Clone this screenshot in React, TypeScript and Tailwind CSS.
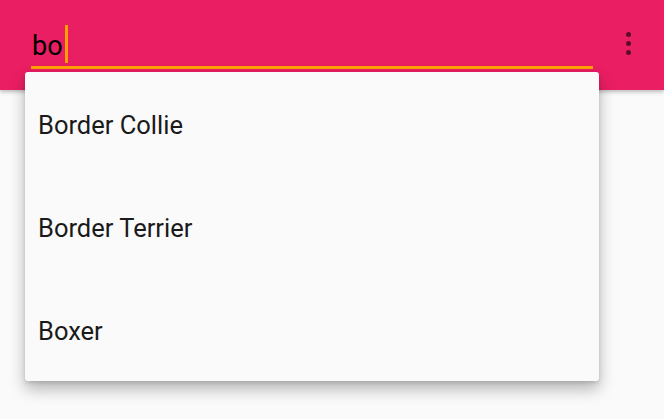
export default function App() {
  const items = ['Border Collie', 'Border Terrier', 'Boxer']

  return (
    <div className="relative h-[419px] w-[664px] overflow-hidden bg-[#fafafa] font-['Roboto',sans-serif]">
      {/* Toolbar */}
      <div className="flex h-[90px] items-start bg-[#e91e63] shadow-[0_2px_4px_rgba(0,0,0,0.25)]">
        <div className="ml-[31px] mt-[24px] w-[562px]">
          <div className="flex h-[40px] items-center text-[27px] leading-none text-black">
            <span className="pl-[1px] pt-[4px]">bo</span>
            <span className="ml-[2px] h-[38px] w-[3px] bg-[#ffa000]" />
          </div>
          <div className="mt-[2px] h-[3px] bg-[#ffa000]" />
        </div>
        <div className="ml-auto mr-[33px] mt-[32px] flex flex-col gap-[4px]">
          <span className="h-[5px] w-[5px] rounded-full bg-black/60" />
          <span className="h-[5px] w-[5px] rounded-full bg-black/60" />
          <span className="h-[5px] w-[5px] rounded-full bg-black/60" />
        </div>
      </div>

      {/* Suggestions dropdown */}
      <div className="absolute left-[25px] top-[72px] w-[574px] rounded-[3px] bg-[#fafafa] shadow-[0_8px_16px_rgba(0,0,0,0.28),0_2px_4px_rgba(0,0,0,0.12)]">
        {items.map(name => (
          <div key={name} className="flex h-[103px] items-center pl-[13px] pt-[3px] text-[25.5px] text-[#1a1a1a]">
            {name}
          </div>
        ))}
      </div>
    </div>
  )
}
